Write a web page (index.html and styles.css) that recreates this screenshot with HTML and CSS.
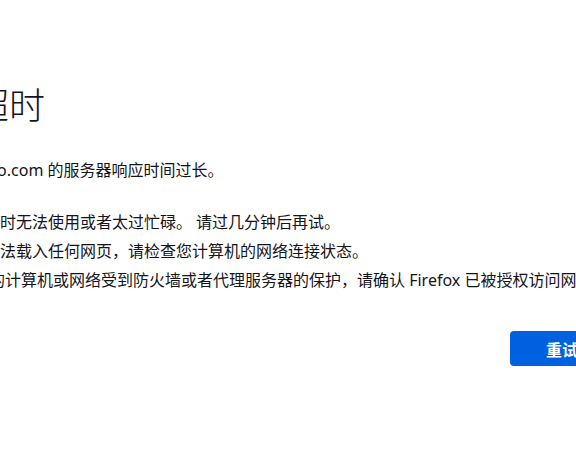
FILE: index.html
```html
<!DOCTYPE html>
<html lang="zh-CN">
<head>
<meta charset="utf-8">
<title>连接超时</title>
<link rel="stylesheet" href="styles.css">
</head>
<body>
<main class="page">
  <h1 class="title">连接超时</h1>
  <p class="intro">www.yahoo.com 的服务器响应时间过长。</p>
  <ul class="tips">
    <li>此站点暂时无法使用或者太过忙碌。<span class="gap"></span>请过几分钟后再试。</li>
    <li>如果您无法载入任何网页，请检查您计算机的网络连接状态。</li>
    <li class="shift">如果您的计算机或网络受到防火墙或者代理服务器的保护，请确认 Firefox 已被授权访问网络。</li>
  </ul>
  <div class="actions">
    <button class="primary">重试</button>
  </div>
</main>
</body>
</html>
```

FILE: styles.css
```css
html, body {
  margin: 0;
  padding: 0;
  background: #ffffff;
  overflow: hidden;
  width: 576px;
  height: 460px;
}
.page {
  margin-left: -99px;
  width: 1200px;
  padding-top: 79px;
  color: #15141a;
  font-family: "Noto Sans", "Noto Sans CJK SC", sans-serif;
  font-size: 16px;
}
.title {
  margin: 0;
  font-size: 36px;
  line-height: 48px;
  font-weight: 300;
  font-family: "Noto Sans CJK SC", sans-serif;
}
.intro {
  margin: 32px 0 0 18px;
  line-height: 22px;
}
.tips {
  margin: 30px 0 0 0;
  padding-left: 35px;
}
.tips li {
  line-height: 22px;
  margin-bottom: 7px;
}
.tips li.shift {
  margin-left: 5px;
}
.gap {
  display: inline-block;
  width: 4px;
}
.actions {
  display: flex;
  margin-top: 40px;
  padding-left: 609px;
}
.primary {
  background: #0061e0;
  color: #ffffff;
  border: none;
  border-radius: 4px;
  height: 35px;
  padding: 0 36px;
  font-family: "Noto Sans CJK SC", sans-serif;
  font-size: 16px;
  font-weight: 700;
}
```
